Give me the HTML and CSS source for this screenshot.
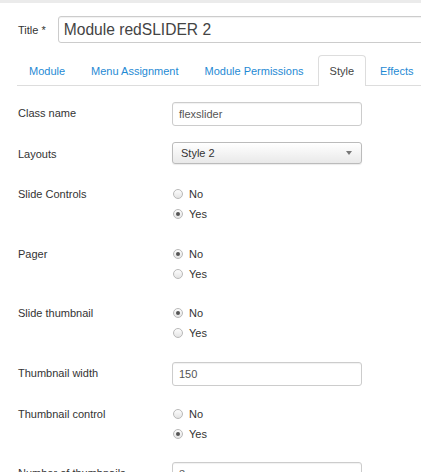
FILE: index.html
```html
<!DOCTYPE html>
<html>
<head>
<meta charset="utf-8">
<link rel="stylesheet" href="styles.css">
</head>
<body>
<div class="topbar"></div>
<div class="page">
  <div class="title-row">
    <label class="title-label">Title *</label>
    <div class="title-input">Module redSLIDER 2</div>
  </div>
  <ul class="tabs">
    <li class="tab">Module</li>
    <li class="tab">Menu Assignment</li>
    <li class="tab">Module Permissions</li>
    <li class="tab active">Style</li>
    <li class="tab">Effects</li>
  </ul>
  <div class="form">
    <div class="group">
      <div class="control-label">Class name</div>
      <div class="text-input">flexslider</div>
    </div>
    <div class="group">
      <div class="control-label">Layouts</div>
      <div class="select">
        <span>Style 2</span>
        <svg class="caret" width="6" height="4" viewBox="0 0 6 4"><polygon points="0,0 6,0 3,4" fill="#777"/></svg>
      </div>
    </div>
    <div class="group">
      <div class="control-label">Slide Controls</div>
      <div class="radios">
        <div class="opt"><span class="radio"></span>No</div>
        <div class="opt"><span class="radio checked"></span>Yes</div>
      </div>
    </div>
    <div class="group">
      <div class="control-label">Pager</div>
      <div class="radios">
        <div class="opt"><span class="radio checked"></span>No</div>
        <div class="opt"><span class="radio"></span>Yes</div>
      </div>
    </div>
    <div class="group">
      <div class="control-label">Slide thumbnail</div>
      <div class="radios">
        <div class="opt"><span class="radio checked"></span>No</div>
        <div class="opt"><span class="radio"></span>Yes</div>
      </div>
    </div>
    <div class="group">
      <div class="control-label">Thumbnail width</div>
      <div class="text-input">150</div>
    </div>
    <div class="group">
      <div class="control-label">Thumbnail control</div>
      <div class="radios">
        <div class="opt"><span class="radio"></span>No</div>
        <div class="opt"><span class="radio checked"></span>Yes</div>
      </div>
    </div>
    <div class="group">
      <div class="control-label">Number of thumbnails</div>
      <div class="text-input">3</div>
    </div>
  </div>
</div>
</body>
</html>
```
FILE: styles.css
```css
* {
  box-sizing: border-box;
}
html, body {
  margin: 0;
  padding: 0;
  background: #fff;
  width: 421px;
  height: 472px;
  overflow: hidden;
  font-family: "Liberation Sans", Arial, sans-serif;
  font-size: 11px;
  color: #333;
}
.topbar {
  height: 3px;
  background: #ebebeb;
}
.page {
  padding: 13px 0 0 17px;
}
.title-row {
  display: flex;
  align-items: center;
  gap: 12px;
  padding-left: 1px;
  overflow: hidden;
}
.title-label {
  flex: none;
  white-space: nowrap;
  font-size: 11px;
  color: #333;
}
.title-input {
  flex: none;
  width: 400px;
  height: 27px;
  border: 1px solid #ccc;
  border-radius: 3px;
  box-shadow: inset 0 1px 1px rgba(0,0,0,0.06);
  font-size: 15.6px;
  line-height: 25px;
  padding-left: 5px;
  color: #444;
  white-space: nowrap;
}
.tabs {
  list-style: none;
  margin: 12px 0 0 0;
  padding: 0;
  display: flex;
  border-bottom: 1px solid #ddd;
}
.tab {
  height: 30px;
  line-height: 30px;
  padding: 0 11px;
  margin-right: 2px;
  border: 1px solid transparent;
  border-bottom: none;
  border-radius: 4px 4px 0 0;
  color: #1f8ad4;
  white-space: nowrap;
}
.tab.active {
  border-color: #ddd;
  background: #fff;
  color: #444;
  margin-bottom: -1px;
  height: 31px;
}
.form {
  padding-top: 16px;
  display: flex;
  flex-direction: column;
  gap: 17px;
}
.group {
  display: flex;
  align-items: flex-start;
}
.control-label {
  width: 155px;
  flex: none;
  padding-left: 1px;
  padding-top: 1px;
  line-height: 20px;
  white-space: nowrap;
  color: #333;
}
.text-input {
  width: 190px;
  height: 24px;
  line-height: 22px;
  border: 1px solid #ccc;
  border-radius: 3px;
  padding: 0 6px;
  color: #555;
  box-shadow: inset 0 1px 1px rgba(0,0,0,0.06);
}
.select {
  width: 190px;
  height: 22px;
  line-height: 20px;
  border: 1px solid #bbb;
  border-radius: 3px;
  padding: 0 8px;
  margin-top: -1px;
  margin-bottom: 2px;
  display: flex;
  align-items: center;
  justify-content: space-between;
  background: linear-gradient(#fff, #e9e9e9);
  box-shadow: 0 1px 1px rgba(0,0,0,0.08);
  color: #333;
}
.caret {
  margin-right: 1px;
}
.radios {
  padding: 1px 0 1.5px;
  display: flex;
  flex-direction: column;
}
.opt {
  height: 20px;
  display: flex;
  align-items: center;
  color: #333;
  padding-left: 1px;
}
.radio {
  width: 10px;
  height: 10px;
  border: 1px solid #b9b9b9;
  border-radius: 50%;
  background: linear-gradient(#fdfdfd, #e4e4e4);
  margin-right: 6px;
  position: relative;
}
.radio.checked::after {
  content: "";
  position: absolute;
  left: 2px;
  top: 2px;
  width: 4px;
  height: 4px;
  border-radius: 50%;
  background: #555;
}
```
